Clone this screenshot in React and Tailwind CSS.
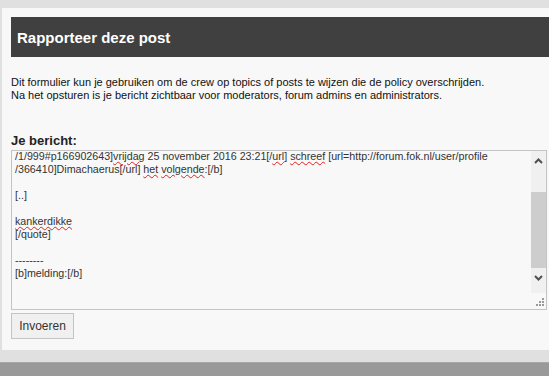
import React from "react";

const W = ({ children }) => (
  <span className="underline decoration-wavy decoration-[#e0201b] decoration-[1px] underline-offset-[1px]">{children}</span>
);

export default function App() {
  return (
    <div className="w-[549px] h-[376px] overflow-hidden bg-[#e0e0e0] pt-[8px] font-['Liberation_Sans',Arial,sans-serif]">
      <div className="ml-[2px] h-[342px] bg-[#f8f8f8] pl-[9px] pt-[9px]">
        <div className="h-[40px] bg-[#404040] flex items-center pl-[6px]">
          <span className="text-white font-bold text-[15px] leading-none">Rapporteer deze post</span>
        </div>
        <div className="mt-[19px] text-[11px] leading-[13px] text-[#111]">
          <div>Dit formulier kun je gebruiken om de crew op topics of posts te wijzen die de policy overschrijden.</div>
          <div>Na het opsturen is je bericht zichtbaar voor moderators, forum admins en administrators.</div>
        </div>
        <div className="mt-[31px] text-[13px] leading-[16px] font-bold text-[#222]">Je bericht:</div>
        <div className="mt-[1px] w-[536px] h-[160px] border border-[#c4c4c4] bg-[#f8f8f8] flex overflow-hidden">
          <div className="flex-1 overflow-hidden pl-[3px]">
            <div className="-mt-[1px] text-[10.7px] leading-[13px] text-[#333] whitespace-pre">
              <div>/1/999#p166902643]<W>vrijdag</W> 25 november 2016 23:21[/<W>url</W>] <W>schreef</W> [url=http://forum.fok.nl/user/profile</div>
              <div>/366410]Dimachaerus[/url] <W>het</W> <W>volgende</W>:[/b]</div>
              <div>&nbsp;</div>
              <div>[..]</div>
              <div>&nbsp;</div>
              <div><W>kankerdikke</W></div>
              <div>[/quote]</div>
              <div>&nbsp;</div>
              <div>--------</div>
              <div>[b]melding:[/b]</div>
            </div>
          </div>
          <div className="w-[15px] flex flex-col">
            <div className="h-[142px] bg-[#f0f0f0] flex flex-col">
              <div className="h-[41px] flex justify-center pt-[7px]">
                <svg width="9" height="6" viewBox="0 0 9 6">
                  <polyline points="1,5 4.5,1.5 8,5" fill="none" stroke="#505050" strokeWidth="2" />
                </svg>
              </div>
              <div className="h-[76px] bg-[#cdcdcd]"></div>
              <div className="flex-1 flex justify-center items-start pt-[7px]">
                <svg width="9" height="6" viewBox="0 0 9 6">
                  <polyline points="1,1 4.5,4.5 8,1" fill="none" stroke="#505050" strokeWidth="2" />
                </svg>
              </div>
            </div>
            <div className="flex-1 flex items-end justify-end pb-[2px] pr-[1px]">
              <svg width="9" height="9" viewBox="0 0 9 9">
                <rect x="6" y="0" width="2" height="2" fill="#9a9a9a" />
                <rect x="3" y="3" width="2" height="2" fill="#9a9a9a" />
                <rect x="6" y="3" width="2" height="2" fill="#9a9a9a" />
                <rect x="0" y="6" width="2" height="2" fill="#9a9a9a" />
                <rect x="3" y="6" width="2" height="2" fill="#9a9a9a" />
                <rect x="6" y="6" width="2" height="2" fill="#9a9a9a" />
              </svg>
            </div>
          </div>
        </div>
        <button className="mt-[3px] w-[63px] h-[26px] border border-[#c4c4c4] bg-[#f0f0f0] text-[12px] text-[#333] flex items-center justify-center">
          Invoeren
        </button>
      </div>
      <div className="mt-[12px] h-[14px] bg-[#999999] border-t border-[#a8a8a8]"></div>
    </div>
  );
}
